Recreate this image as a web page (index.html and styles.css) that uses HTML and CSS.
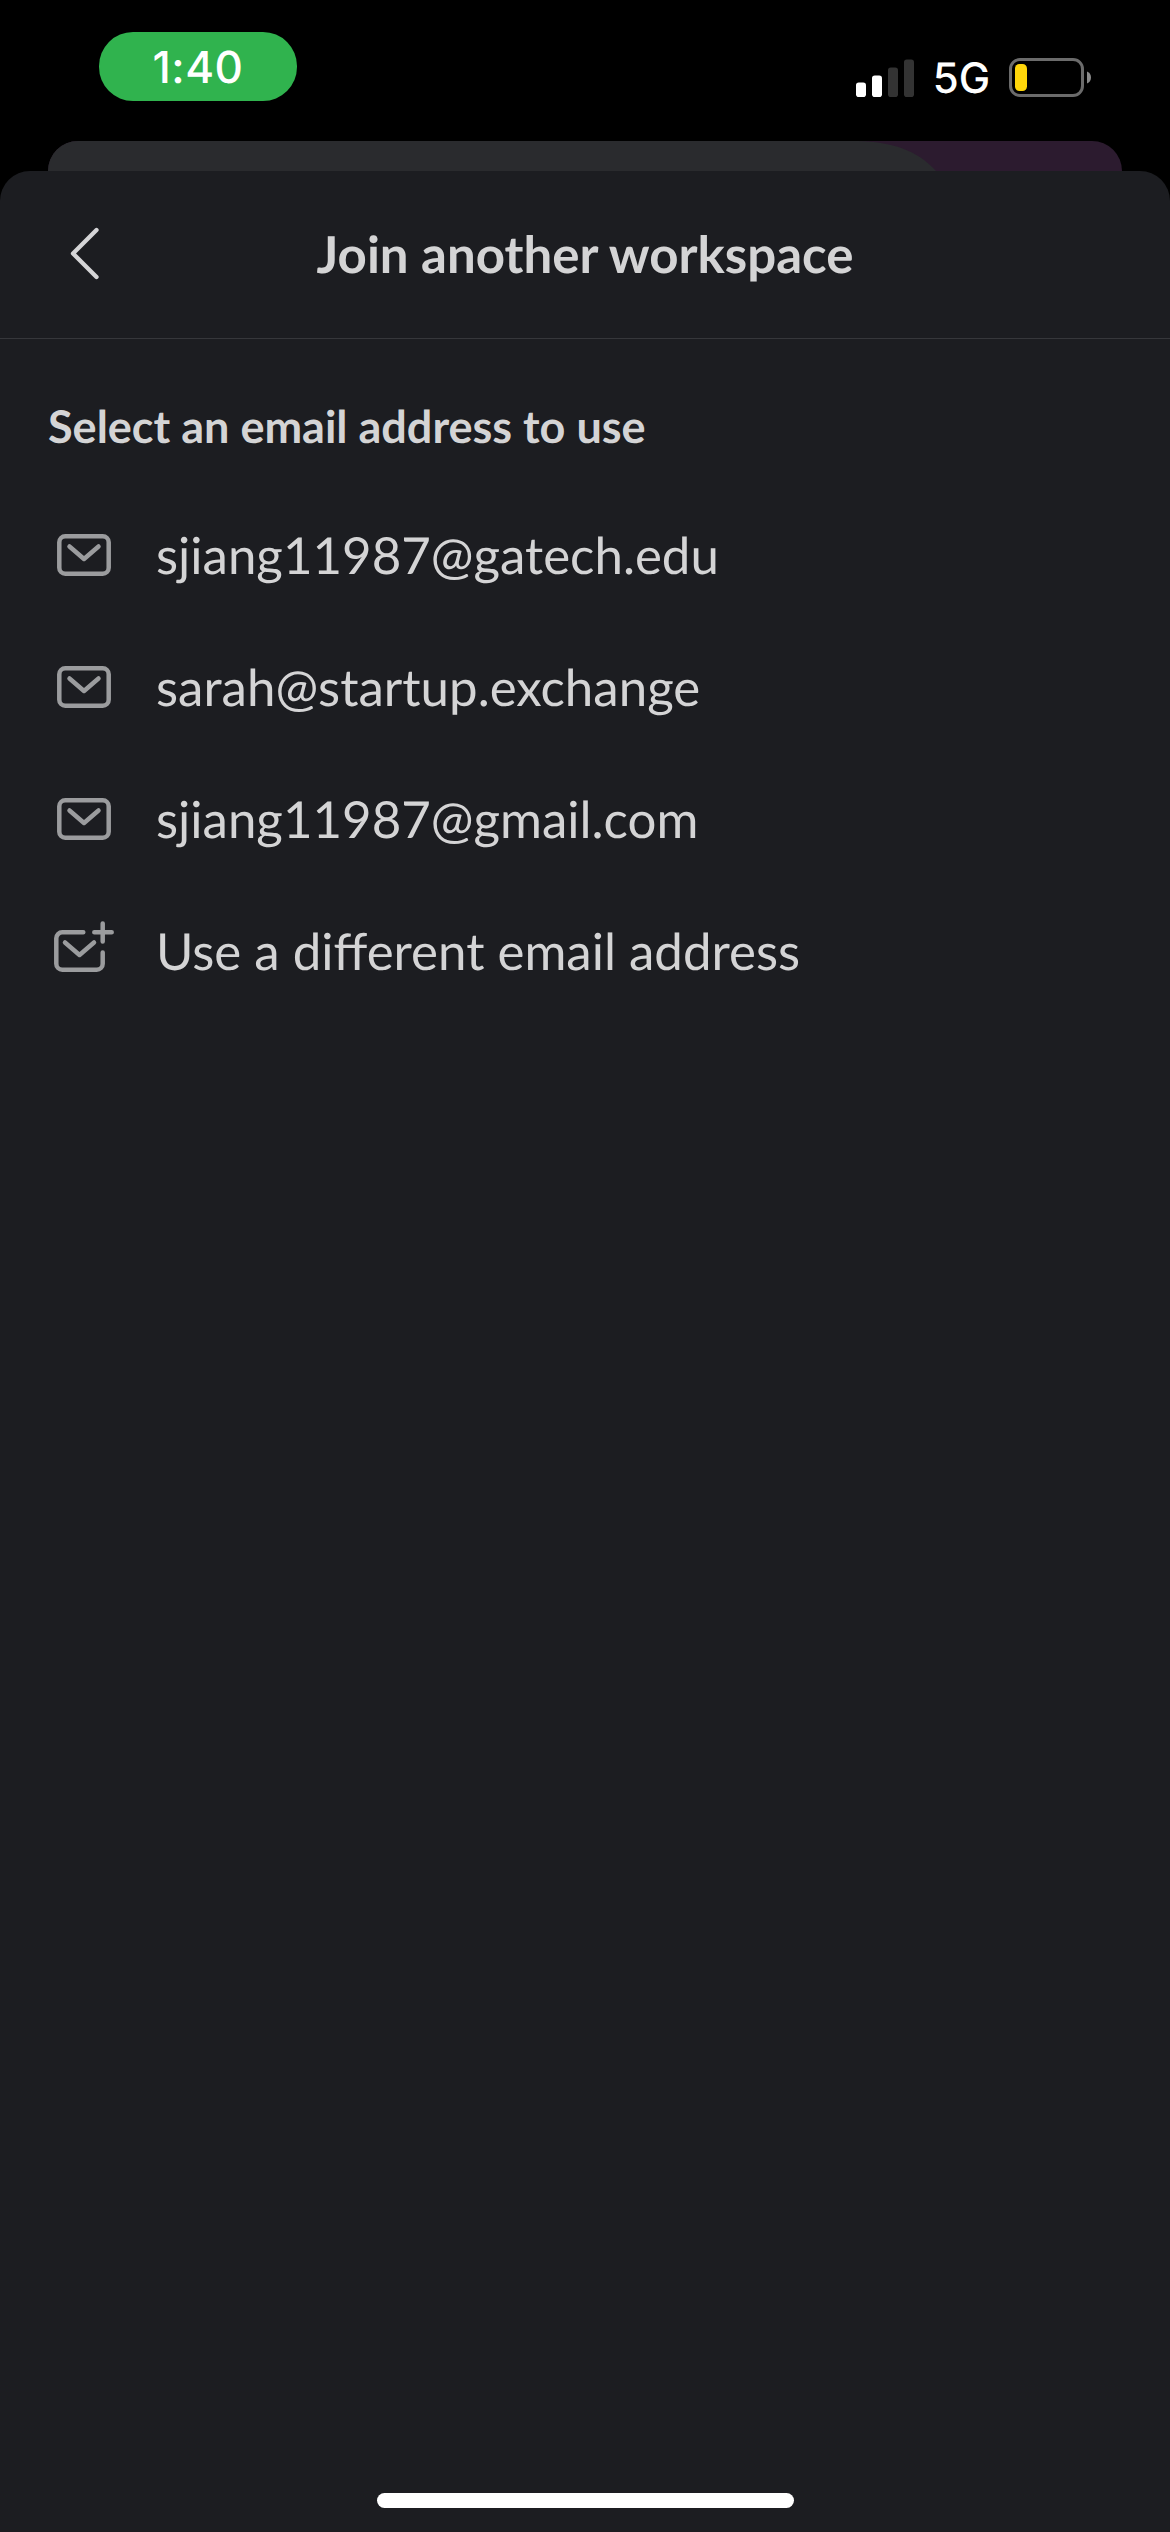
FILE: index.html
```html
<!DOCTYPE html>
<html lang="en">
<head>
<meta charset="utf-8">
<title>Join another workspace</title>
<link rel="stylesheet" href="styles.css">
</head>
<body>
<div class="screen">
  <div class="status-bar">
    <div class="time-pill">1:40</div>
    <div class="status-right">
      <svg class="signal" width="58" height="38" viewBox="0 0 58 38">
        <rect x="0" y="23.5" width="10" height="14.5" rx="2.8" fill="#fff"/>
        <rect x="16" y="16.5" width="10" height="21.5" rx="2.8" fill="#fff"/>
        <rect x="32" y="8.5" width="10" height="29.5" rx="2.8" fill="#333"/>
        <rect x="48" y="0.5" width="10" height="37.5" rx="2.8" fill="#333"/>
      </svg>
      <span class="network">5G</span>
      <svg class="battery" width="82" height="39" viewBox="0 0 82 39">
        <rect x="1.5" y="1.5" width="72" height="36" rx="9.5" fill="none" stroke="#6b6b6b" stroke-width="3"/>
        <rect x="6" y="6" width="12" height="27" rx="4.5" fill="#ffd60a"/>
        <path d="M78 13.5c2.600 1 4 3.300 4 6s-1.400 5-4 6z" fill="#8a8a8a"/>
      </svg>
    </div>
  </div>
  <div class="back-card">
    <svg class="back-panel" width="889" height="30" viewBox="0 0 889 30">
      <path d="M0 0H810C844 1 869 9 888 30H0z" fill="#2a2b2e"/>
    </svg>
  </div>
  <main class="sheet">
    <header class="header">
      <svg class="back" width="30" height="54" viewBox="0 0 30 54">
        <path d="M26.500 3L3 26.500L26.500 50" fill="none" stroke="#d5d5d7" stroke-width="4.300" stroke-linecap="round" stroke-linejoin="round"/>
      </svg>
      <h1 class="title">Join another workspace</h1>
    </header>
    <h2 class="heading">Select an email address to use</h2>
    <ul class="list">
      <li class="row">
        <svg class="icon" viewBox="0 0 60 60"><rect x="5.300" y="11.300" width="49.400" height="37.400" rx="6"/><path d="M15.500 21.500L30 34L44.500 21.500"/></svg>
        <span>sjiang11987@gatech.edu</span>
      </li>
      <li class="row">
        <svg class="icon" viewBox="0 0 60 60"><rect x="5.300" y="11.300" width="49.400" height="37.400" rx="6"/><path d="M15.500 21.500L30 34L44.500 21.500"/></svg>
        <span>sarah@startup.exchange</span>
      </li>
      <li class="row">
        <svg class="icon" viewBox="0 0 60 60"><rect x="5.300" y="11.300" width="49.400" height="37.400" rx="6"/><path d="M15.500 21.500L30 34L44.500 21.500"/></svg>
        <span>sjiang11987@gmail.com</span>
      </li>
      <li class="row">
        <svg class="icon" viewBox="0 0 60 60"><path d="M29.300 11.300H8.300a6 6 0 0 0-6 6V42.700a6 6 0 0 0 6 6H42.700a6 6 0 0 0 6-6V31.500M11 21.500L25.500 34L40 21.500M40.300 11.300H57.700M48.700 2.500V20.500"/></svg>
        <span>Use a different email address</span>
      </li>
    </ul>
    <div class="home-indicator"></div>
  </main>
</div>
</body>
</html>
```
FILE: styles.css
```css
* {
  box-sizing: border-box;
  margin: 0;
  padding: 0;
}

body {
  background: #000;
  color: #d4d4d5;
  font-family: Lato, "Liberation Sans", sans-serif;
  text-rendering: geometricPrecision;
}

svg {
  display: block;
  flex: none;
}

.screen {
  display: flex;
  flex-direction: column;
  width: 1170px;
  height: 2532px;
  overflow: hidden;
}

.status-bar {
  display: flex;
  justify-content: space-between;
  align-items: flex-start;
  height: 141px;
  padding: 32px 79px 0 99px;
  color: #fff;
  font-family: Inter, sans-serif;
}

.time-pill {
  width: 198px;
  height: 69px;
  border-radius: 34px;
  background: #30b34e;
  font-size: 44px;
  font-weight: 500;
  line-height: 70px;
  letter-spacing: 0.5px;
  text-align: center;
}

.status-right {
  display: flex;
  align-items: center;
  height: 39px;
  margin-top: 26px;
}

.network {
  width: 95px;
  padding-top: 2px;
  font-size: 42px;
  font-weight: 500;
  line-height: 39px;
  text-align: center;
}

.back-card {
  height: 30px;
  margin: 0 48px;
  border-radius: 30px 30px 0 0;
  background: #2c1b2f;
  overflow: hidden;
}

.sheet {
  display: flex;
  flex: 1;
  flex-direction: column;
  border-radius: 30px 30px 0 0;
  background: #1c1d21;
}

.header {
  display: grid;
  grid-template-columns: 120px 1fr 120px;
  align-items: center;
  height: 168px;
  padding-bottom: 2px;
  border-bottom: 1px solid #36373b;
}

.back {
  margin-left: 70px;
}

.title {
  font-size: 51px;
  font-weight: 700;
  line-height: 60px;
  text-align: center;
  white-space: nowrap;
}

.heading {
  margin-top: 57px;
  padding-left: 48px;
  font-size: 45px;
  font-weight: 700;
  line-height: 60px;
}

.list {
  margin-top: 33px;
  list-style: none;
}

.row {
  display: flex;
  align-items: center;
  gap: 42px;
  height: 132px;
  padding-left: 54px;
  font-size: 51px;
  line-height: 60px;
}

.icon {
  width: 60px;
  height: 60px;
  fill: none;
  stroke: #9b9c9e;
  stroke-width: 4.500px;
  stroke-linecap: round;
  stroke-linejoin: round;
}

.home-indicator {
  width: 417px;
  height: 15px;
  margin: auto auto 24px 377px;
  border-radius: 8px;
  background: #fff;
}
```
